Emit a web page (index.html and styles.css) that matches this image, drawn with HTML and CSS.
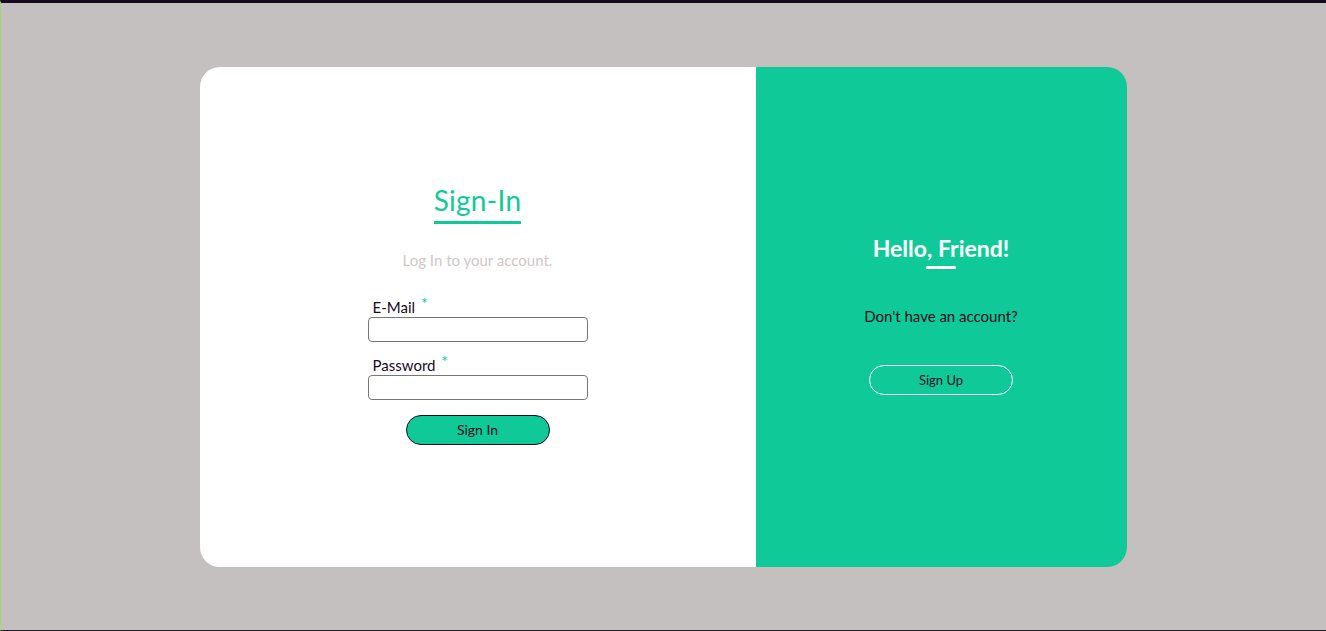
FILE: index.html
```html
<!DOCTYPE html>
<html lang="en">
<head>
<meta charset="utf-8">
<title>Sign In</title>
<link rel="stylesheet" href="styles.css">
</head>
<body>
<div class="page">
  <div class="card">
    <section class="panel-left">
      <h1 class="title">Sign-In</h1>
      <p class="subtitle">Log In to your account.</p>
      <form class="form">
        <label class="field">
          <span class="label">E-Mail <span class="req">*</span></span>
          <input class="input" type="email">
        </label>
        <label class="field">
          <span class="label">Password <span class="req">*</span></span>
          <input class="input" type="password">
        </label>
        <button class="btn-primary" type="button">Sign In</button>
      </form>
    </section>
    <section class="panel-right">
      <h2 class="hello">Hello, Friend!</h2>
      <div class="bar"></div>
      <p class="question">Don't have an account?</p>
      <button class="btn-outline" type="button">Sign Up</button>
    </section>
  </div>
</div>
</body>
</html>
```

FILE: styles.css
```css
* { box-sizing: border-box; }
html, body { margin: 0; padding: 0; height: 100%; }
body {
  font-family: "Lato", "Noto Sans", sans-serif;
  background: #c4c0bf;
}
.page {
  height: 100%;
  border-top: 3px solid #150a1f;
  border-bottom: 1px solid #1e1a22;
  border-left: 1px solid #a4d86a;
  display: flex;
  align-items: center;
  justify-content: center;
  padding-right: 1px;
}
.card {
  width: 927px;
  height: 500px;
  display: flex;
  border-radius: 20px;
  overflow: hidden;
}
.panel-left {
  width: 556px;
  background: #ffffff;
  display: flex;
  flex-direction: column;
  align-items: center;
  justify-content: center;
  padding-bottom: 4px;
}
.title {
  margin: 0;
  font-weight: 400;
  font-size: 28px;
  line-height: 30px;
  color: #0fca98;
  border-bottom: 3px solid #0fca98;
  padding-bottom: 6px;
  letter-spacing: 0.3px;
}
.subtitle {
  margin: 27px 0 0;
  font-size: 15px;
  line-height: 18px;
  color: #cfc8c8;
}
.form {
  margin-top: 29px;
  display: flex;
  flex-direction: column;
  align-items: center;
}
.field {
  display: flex;
  flex-direction: column;
  width: 220px;
  margin-bottom: 14px;
}
.label {
  font-size: 15px;
  line-height: 19px;
  color: #150a1f;
  padding-left: 5px;
}
.req {
  color: #0fca98;
  font-size: 16px;
  line-height: 0;
  margin-left: 2px;
  position: relative;
  top: -4px;
}
.input {
  width: 220px;
  height: 25px;
  border: 1px solid #767676;
  border-radius: 4px;
  background: #fff;
  margin: 0;
  padding: 0 4px;
}
.btn-primary {
  margin-top: 1px;
  width: 144px;
  height: 30px;
  border-radius: 15px;
  border: 1px solid #150a1f;
  background: #0fca98;
  color: #150a1f;
  font-family: inherit;
  font-size: 14px;
  padding: 0;
}
.panel-right {
  flex: 1;
  background: #0fca98;
  display: flex;
  flex-direction: column;
  align-items: center;
  justify-content: center;
  padding-bottom: 4px;
}
.hello {
  margin: 0;
  font-size: 23px;
  line-height: 28px;
  font-weight: 700;
  color: #ffffff;
}
.bar {
  width: 30px;
  height: 3px;
  border-radius: 2px;
  background: #ffffff;
  margin-top: 4px;
}
.question {
  margin: 38px 0 0;
  font-size: 15px;
  line-height: 18px;
  color: #150a1f;
}
.btn-outline {
  margin-top: 40px;
  width: 144px;
  height: 30px;
  border-radius: 15px;
  border: 1px solid #ffffff;
  background: transparent;
  color: #150a1f;
  font-family: inherit;
  font-size: 13px;
  padding: 0;
}
```
